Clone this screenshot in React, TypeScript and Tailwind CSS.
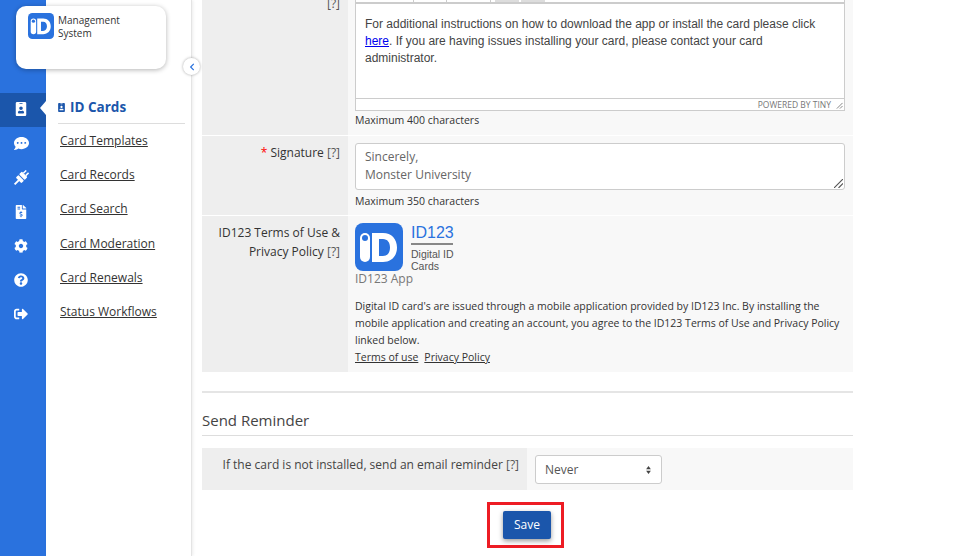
import React from 'react';
import {
  FaIdBadge,
  FaCommentDots,
  FaFileInvoiceDollar,
  FaCog,
  FaQuestionCircle,
  FaSignOutAlt,
  FaChevronLeft,
} from 'react-icons/fa';

// the plug in the rail sits on a diagonal, with the two halves apart
const PlugIcon: React.FC<{ className?: string }> = ({ className }) => (
  <svg viewBox="0 0 16 16" fill="#fff" className={className}>
    <g transform="rotate(45 8 8)">
      <rect x="5.600" y="-1" width="1.500" height="4" />
      <rect x="8.900" y="-1" width="1.500" height="4" />
      <rect x="4" y="2.800" width="8" height="4" rx="1" />
      <rect x="4" y="7.700" width="8" height="3.800" rx="1" />
      <rect x="7" y="11" width="2" height="6" />
    </g>
  </svg>
);

const NAV_ICONS = [FaIdBadge, FaCommentDots, PlugIcon, FaFileInvoiceDollar, FaCog, FaQuestionCircle, FaSignOutAlt];
const MENU_LINKS = ['Card Templates', 'Card Records', 'Card Search', 'Card Moderation', 'Card Renewals', 'Status Workflows'];

const IdLogo: React.FC<{ className: string }> = ({ className }) => (
  <svg viewBox="0 0 48 48" className={className}>
    <rect width="48" height="48" rx="8" fill="#2a72de" />
    <rect x="5" y="10" width="10" height="29" rx="5" fill="#fff" />
    <circle cx="10" cy="15" r="3" fill="#2a72de" />
    <path
      fillRule="evenodd"
      fill="#fff"
      d="M17 10h11c8.500 0 14 6 14 14.500S36.500 39 28 39H17zM24 16v17h4c4.500 0 7-3.500 7-8.500S32.500 16 28 16z"
    />
  </svg>
);

const Help = () => <span className="text-[#555]">[?]</span>;

const App: React.FC = () => {
  return (
    <div className="relative flex h-[556px] w-[968px] overflow-hidden bg-white font-['Open_Sans',sans-serif] text-[#333]">
      {/* Icon rail */}
      <nav className="w-[46px] shrink-0 bg-[#2a72de] pt-[93px]">
        {NAV_ICONS.map((Icon, i) => (
          <div key={i} className={`relative flex h-[34px] items-center justify-center pr-[4px] ${i === 0 ? 'bg-[#1b56ab]' : ''}`}>
            <Icon className={`text-white ${i === 2 ? 'h-[16px] w-[16px]' : 'text-[14px]'} ${i < 2 ? 'mb-[2px]' : ''} ${i === 1 ? 'text-[15px]' : ''}`} />
            {i === 0 && (
              <span className="absolute right-0 top-[8px] h-0 w-0 border-y-[7px] border-r-[6px] border-y-transparent border-r-white" />
            )}
          </div>
        ))}
      </nav>

      {/* Section menu */}
      <aside className="w-[146px] shrink-0 border-r border-[#e4e4e4] pl-[12px] pr-[6px] pt-[97px] shadow-[1px_0_3px_rgba(0,0,0,0.08)]">
        <div className="flex h-[27px] items-start gap-[4px] border-b border-[#ddd] text-[13.500px] font-bold text-[#1b56ab]">
          <FaIdBadge className="-ml-[1px] mt-[6px] text-[9px]" />
          <span className="leading-[20px]">ID Cards</span>
        </div>
        <ul className="pl-[2px]">
          {MENU_LINKS.map((link) => (
            <li key={link} className="flex h-[34.200px] items-center">
              <a className="text-[12px] text-[#333] underline">{link}</a>
            </li>
          ))}
        </ul>
      </aside>

      {/* Logo card */}
      <div className="absolute left-[16px] top-[6px] flex h-[63px] w-[150px] items-start rounded-[10px] bg-white pl-[12px] pt-[7px] shadow-[0_1px_5px_rgba(0,0,0,0.3)]">
        <IdLogo className="h-[26px] w-[26px]" />
        <span className="pl-[4px] pt-[1px] text-[10px] leading-[13px] text-[#333]">
          Management
          <br />
          System
        </span>
      </div>

      {/* Collapse toggle */}
      <button className="absolute left-[183px] top-[58px] flex h-[17px] w-[17px] items-center justify-center rounded-full bg-white shadow-[0_0_3px_rgba(0,0,0,0.35)]">
        <FaChevronLeft className="text-[8px] text-[#2a72de]" />
      </button>

      {/* Main form */}
      <main className="ml-[10px] w-[651px] shrink-0 text-[12px]">
        <div className="mb-[1px] flex h-[135px]">
          <div className="w-[146px] shrink-0 bg-[#eee] pr-[8px] text-right leading-[7px]">
            <Help />
          </div>
          <div className="flex-1 bg-[#f8f8f8] pl-[7px] pr-[8px]">
            <div className="h-[111px] w-[490px] border border-t-0 border-[#ccc] bg-white">
              <div className="flex h-[4px] border-b-2 border-[#ccc]">
                <span className="w-[58px] border-r border-[#ccc]" />
                <span className="w-[33px] border-r border-[#ccc]" />
                <span className="w-[44px] border-r border-[#ccc]" />
                <span className="ml-[4px] mr-[2px] w-[24px] bg-[#ddd]" />
                <span className="w-[24px] bg-[#ddd]" />
              </div>
              <div className="h-[95px] border-b border-[#ccc] px-[9px] pt-[12px] font-['Liberation_Sans',sans-serif] text-[12px] leading-[17px] text-[#444]">
                For additional instructions on how to download the app or install the card please click{' '}
                <a className="text-[#00e] underline">here</a>. If you are having issues installing your card, please contact your card administrator.
              </div>
              <div className="flex h-[12px] items-center justify-end pr-[1px] text-[8.500px] text-[#777]">
                <span>POWERED BY TINY</span>
                <svg viewBox="0 0 8 8" className="ml-[5px] h-[7px] w-[7px] stroke-[#777]">
                  <path d="M1 7.500 7.500 1M4.500 7.500 7.500 4.500" />
                </svg>
              </div>
            </div>
            <p className="pt-[1px] text-[10.500px] leading-[16px] text-[#333]">Maximum 400 characters</p>
          </div>
        </div>

        <div className="mb-[1px] flex h-[79px]">
          <div className="w-[146px] shrink-0 bg-[#eee] pr-[8px] pt-[8px] text-right leading-[18px]">
            <span className="text-[#f00]">*</span> Signature <Help />
          </div>
          <div className="flex-1 bg-[#f8f8f8] pl-[7px] pr-[8px] pt-[7px]">
            <div className="relative h-[47px] w-[490px] rounded-[3px] border border-[#ccc] bg-white px-[9px] pt-[4px] text-[12px] leading-[18px] text-[#666]">
              Sincerely,
              <br />
              Monster University
              <svg viewBox="0 0 8 8" className="absolute bottom-[1px] right-[1px] h-[9px] w-[9px] stroke-[#555]">
                <path d="M0 8 8 0M4 8 8 4" />
              </svg>
            </div>
            <p className="pt-[3px] text-[10.500px] leading-[16px] text-[#333]">Maximum 350 characters</p>
          </div>
        </div>

        <div className="flex h-[156px]">
          <div className="w-[146px] shrink-0 bg-[#eee] pl-[8px] pr-[8px] pt-[7px] text-right leading-[19px]">
            ID123 Terms of Use &amp; Privacy Policy <Help />
          </div>
          <div className="flex-1 bg-[#f8f8f8] pl-[7px] pr-[8px] pt-[7px]">
            <div className="flex h-[48px]">
              <IdLogo className="h-[48px] w-[48px]" />
              <div className="ml-[8px] w-[42px]">
                <div className="border-b-2 border-[#888] font-['Liberation_Sans',sans-serif] text-[16px] leading-[20px] text-[#2a72de]">ID123</div>
                <div className="whitespace-nowrap pt-[3px] font-['Liberation_Sans',sans-serif] text-[10.500px] leading-[12px] text-[#555]">
                  Digital ID
                  <br />
                  Cards
                </div>
              </div>
            </div>
            <div className="text-[12px] leading-[16px] text-[#777]">ID123 App</div>
            <p className="pt-[11px] text-[10.500px] leading-[17px] text-[#333]">
              Digital ID card's are issued through a mobile application provided by ID123 Inc. By installing the mobile application and creating an account, you agree to the ID123 Terms of Use and Privacy Policy linked below.
            </p>
            <div className="text-[10.500px] leading-[17px] text-[#333]">
              <a className="underline">Terms of use</a>
              <a className="ml-[6px] underline">Privacy Policy</a>
            </div>
          </div>
        </div>

        <hr className="mt-[19px] border-t-2 border-[#e5e5e5]" />

        <h3 className="mt-[17px] border-b border-[#ddd] pb-[5px] text-[15px] leading-[20px] text-[#444]">Send Reminder</h3>

        <div className="mt-[12px] flex h-[42px]">
          <div className="w-[325px] shrink-0 bg-[#eee] pr-[8px] pt-[8px] text-right text-[12px] leading-[18px] text-[#444]">
            If the card is not installed, send an email reminder <Help />
          </div>
          <div className="flex-1 bg-[#f8f8f8] pl-[8px] pt-[7px]">
            <div className="flex h-[29px] w-[127px] items-center justify-between rounded-[3px] border border-[#ccc] bg-white pl-[9px] pr-[10px] text-[12px] text-[#555]">
              Never
              <svg viewBox="0 0 6 10" className="h-[8px] w-[5px] fill-[#444]">
                <path d="M3 0 6 4H0zM3 10 0 6h6z" />
              </svg>
            </div>
          </div>
        </div>

        <div className="mt-[12px] flex justify-center pr-[4px]">
          <div className="border-[3px] border-[#ed1c24] pb-[6px] pl-[13px] pr-[10px] pt-[6px]">
            <button className="flex h-[28px] w-[48px] items-center justify-center rounded-[2px] bg-[#1b56ab] text-[12px] font-medium text-white shadow-[0_2px_5px_rgba(0,0,0,0.4)]">
              Save
            </button>
          </div>
        </div>
      </main>
    </div>
  );
};

export default App;
